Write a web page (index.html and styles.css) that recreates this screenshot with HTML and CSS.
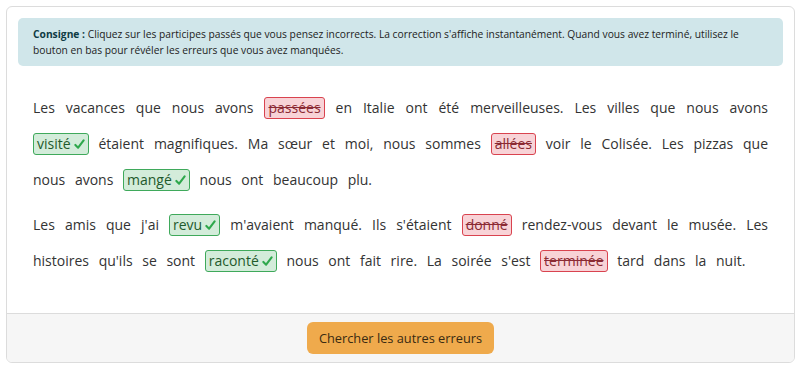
FILE: index.html
```html
<!DOCTYPE html>
<html lang="fr">
<head>
<meta charset="utf-8">
<link rel="stylesheet" href="styles.css">
</head>
<body>
<div class="card">
  <div class="card-body">
    <div class="alert"><strong>Consigne :</strong> Cliquez sur les participes passés que vous pensez incorrects. La correction s'affiche instantanément. Quand vous avez terminé, utilisez le bouton en bas pour révéler les erreurs que vous avez manquées.</div>
    <div class="text">
      <p>Les vacances que nous avons <span class="tag bad">passées</span> en Italie ont été merveilleuses. Les villes que nous avons <span class="tag good">visité<svg class="check" viewBox="0 0 12 12"><path d="M1.5 6.5 L4.5 9.5 L10.5 1.5"/></svg></span> étaient magnifiques. Ma sœur et moi, nous sommes <span class="tag bad">allées</span> voir le Colisée. Les pizzas que nous avons <span class="tag good">mangé<svg class="check" viewBox="0 0 12 12"><path d="M1.5 6.5 L4.5 9.5 L10.5 1.5"/></svg></span> nous ont beaucoup plu.</p>
      <p>Les amis que j'ai <span class="tag good">revu<svg class="check" viewBox="0 0 12 12"><path d="M1.5 6.5 L4.5 9.5 L10.5 1.5"/></svg></span> m'avaient manqué. Ils s'étaient <span class="tag bad">donné</span> rendez-vous devant le musée. Les histoires qu'ils se sont <span class="tag good">raconté<svg class="check" viewBox="0 0 12 12"><path d="M1.5 6.5 L4.5 9.5 L10.5 1.5"/></svg></span> nous ont fait rire. La soirée s'est <span class="tag bad">terminée</span> tard dans la nuit.</p>
    </div>
  </div>
  <div class="card-footer">
    <button class="btn">Chercher les autres erreurs</button>
  </div>
</div>
</body>
</html>
```

FILE: styles.css
```css
* { box-sizing: border-box; }
html, body { margin: 0; background: #fff; }
body {
  padding: 6px 5px 4px 6px;
  font-family: "Open Sans", "Noto Sans", sans-serif;
  color: #333;
}
.card {
  border: 1px solid #dcdcdc;
  border-radius: 6px;
  overflow: hidden;
  background: #fff;
}
.card-body {
  padding: 11px 11px 34px 11px;
}
.alert {
  background: #d0e6ea;
  border-radius: 5px;
  padding: 8px 15px 8px 15px;
  font-size: 10.25px;
  line-height: 16px;
  color: #222;
}
.alert strong { color: #0e3b44; font-weight: 700; }
.text {
  padding: 24px 15px 0 15px;
}
.text p {
  margin: 0 0 9px 0;
  font-size: 14px;
  line-height: 36px;
  text-align: justify;
  word-spacing: 6px;
  color: #333;
}
.text p:last-child { margin-bottom: 0; }
.tag {
  display: inline-block;
  line-height: 20px;
  padding: 0 3px;
  border-radius: 3px;
  border: 1px solid;
  word-spacing: 0;
}
.tag.bad {
  background: #f8d3d7;
  border-color: #d9434f;
  color: #8b2a33;
  text-decoration: line-through;
}
.tag.good {
  background: #d3ecda;
  border-color: #3fa95b;
  color: #1f5a2c;
}
.check {
  width: 11px;
  height: 11px;
  margin-left: 3px;
  vertical-align: -1px;
}
.check path {
  fill: none;
  stroke: #2ea84c;
  stroke-width: 2.3;
  stroke-linecap: round;
  stroke-linejoin: round;
}
.card-footer {
  background: #f6f6f6;
  border-top: 1px solid #dcdcdc;
  padding: 8px 0 8px;
  display: flex;
  justify-content: center;
}
.btn {
  background: #efaa4c;
  border: none;
  border-radius: 6px;
  height: 32px;
  width: 187px;
  font-family: "Open Sans", "Noto Sans", sans-serif;
  font-size: 12.8px;
  color: #3a2a12;
  padding: 0;
}
```
